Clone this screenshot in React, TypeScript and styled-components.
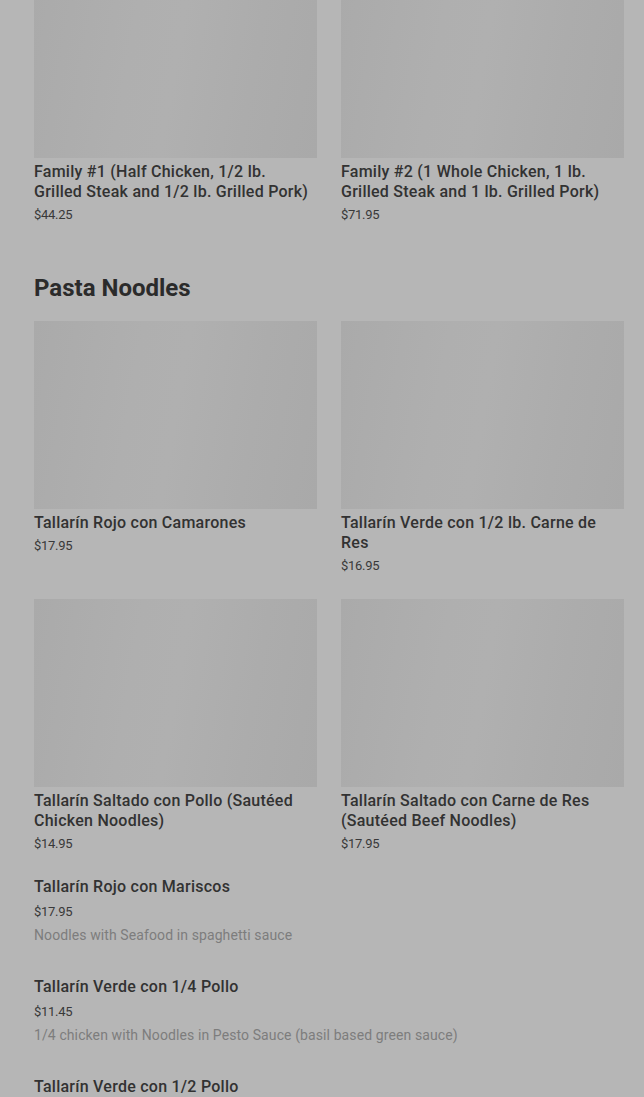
import styled, { createGlobalStyle } from 'styled-components';

const GlobalStyle = createGlobalStyle`
  html, body {
    margin: 0;
    padding: 0;
    background: #b6b6b6;
  }
  body {
    font-family: Roboto, "Liberation Sans", sans-serif;
    color: #2f2f2f;
    overflow: hidden;
  }
`;

type Dish = {
  name: string;
  price: string;
  description?: string;
};

const familyDishes: Dish[] = [
  { name: 'Family #1 (Half Chicken, 1/2 lb. Grilled Steak and 1/2 lb. Grilled Pork)', price: '$44.25' },
  { name: 'Family #2 (1 Whole Chicken, 1 lb. Grilled Steak and 1 lb. Grilled Pork)', price: '$71.95' },
];

const pastaFeatured: Dish[] = [
  { name: 'Tallarín Rojo con Camarones', price: '$17.95' },
  { name: 'Tallarín Verde con 1/2 lb. Carne de Res', price: '$16.95' },
  { name: 'Tallarín Saltado con Pollo (Sautéed Chicken Noodles)', price: '$14.95' },
  { name: 'Tallarín Saltado con Carne de Res (Sautéed Beef Noodles)', price: '$17.95' },
];

const pastaList: Dish[] = [
  { name: 'Tallarín Rojo con Mariscos', price: '$17.95', description: 'Noodles with Seafood in spaghetti sauce' },
  { name: 'Tallarín Verde con 1/4 Pollo', price: '$11.45', description: '1/4 chicken with Noodles in Pesto Sauce (basil based green sauce)' },
  { name: 'Tallarín Verde con 1/2 Pollo', price: '$15.95', description: 'Half chicken with Noodles in Pesto Sauce' },
];

const Page = styled.main`
  padding: 0 20px 0 34px;
  /* page is scrolled into the menu */
  margin-top: -30px;
`;

const Section = styled.section`
  display: flex;
  flex-direction: column;
  margin-bottom: 47px;
`;

const SectionTitle = styled.h2`
  margin: 0 0 17px;
  font-size: 24px;
  line-height: 32px;
  font-weight: 700;
  letter-spacing: 0;
  color: #2b2b2b;
`;

const CardGrid = styled.div`
  display: grid;
  grid-template-columns: 283px 283px;
  column-gap: 24px;
  row-gap: 23px;
`;

const Card = styled.div`
  display: flex;
  flex-direction: column;
`;

const Thumb = styled.div`
  height: 188px;
  background: linear-gradient(100deg, #aaaaaa 0%, #afafaf 35%, #b0b0b0 50%, #acacac 75%, #a9a9a9 100%);
`;

const DishName = styled.div<{ $gap?: number }>`
  margin-top: ${p => p.$gap ?? 4}px;
  font-size: 16px;
  line-height: 20px;
  font-weight: 500;
  letter-spacing: 0.25px;
  color: #323232;
`;

const Price = styled.div<{ $gap?: number }>`
  margin-top: ${p => p.$gap ?? 3}px;
  font-size: 13px;
  line-height: 20px;
  letter-spacing: -0.3px;
  color: #393939;
`;

const List = styled.div`
  display: flex;
  flex-direction: column;
  margin-top: 23px;
`;

const ListItem = styled.div`
  display: flex;
  flex-direction: column;
  height: 100px;
`;

const Description = styled.div`
  margin-top: 3px;
  font-size: 14px;
  line-height: 20px;
  letter-spacing: 0.1px;
  color: #7d7d7d;
`;

const DishCard = ({ dish }: { dish: Dish }) => (
  <Card>
    <Thumb />
    <DishName>{dish.name}</DishName>
    <Price>{dish.price}</Price>
  </Card>
);

const App = () => (
  <>
    <GlobalStyle />
    <Page>
      <Section>
        <CardGrid>
          {familyDishes.map(d => (
            <DishCard key={d.name} dish={d} />
          ))}
        </CardGrid>
      </Section>
      <Section>
        <SectionTitle>Pasta Noodles</SectionTitle>
        <CardGrid>
          {pastaFeatured.map(d => (
            <DishCard key={d.name} dish={d} />
          ))}
        </CardGrid>
        <List>
          {pastaList.map(d => (
            <ListItem key={d.name}>
              <DishName $gap={0}>{d.name}</DishName>
              <Price $gap={5}>{d.price}</Price>
              <Description>{d.description}</Description>
            </ListItem>
          ))}
        </List>
      </Section>
    </Page>
  </>
);

export default App;
